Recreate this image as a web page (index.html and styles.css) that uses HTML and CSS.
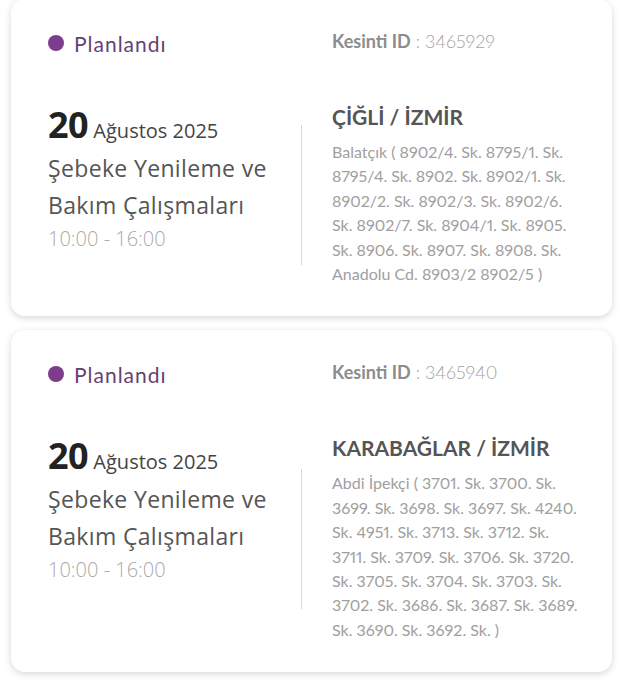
FILE: index.html
```html
<!DOCTYPE html>
<html lang="tr">
<head>
<meta charset="utf-8">
<title>Kesintiler</title>
<link rel="stylesheet" href="styles.css">
</head>
<body>
<div class="list">
  <div class="card">
    <div class="top">
      <div class="status"><span class="dot"></span>Planlandı</div>
      <div class="kid"><b>Kesinti ID</b> : 3465929</div>
    </div>
    <div class="main">
      <div class="when">
        <div class="date"><span class="day">20</span> Ağustos 2025</div>
        <div class="title">Şebeke Yenileme ve Bakım Çalışmaları</div>
        <div class="time">10:00 - 16:00</div>
      </div>
      <div class="divider"></div>
      <div class="where">
        <div class="place">ÇİĞLİ / İZMİR</div>
        <div class="addr">Balatçık ( 8902/4. Sk. 8795/1. Sk. 8795/4. Sk. 8902. Sk. 8902/1. Sk. 8902/2. Sk. 8902/3. Sk. 8902/6. Sk. 8902/7. Sk. 8904/1. Sk. 8905. Sk. 8906. Sk. 8907. Sk. 8908. Sk. Anadolu Cd. 8903/2 8902/5 )</div>
      </div>
    </div>
  </div>
  <div class="card">
    <div class="top">
      <div class="status"><span class="dot"></span>Planlandı</div>
      <div class="kid"><b>Kesinti ID</b> : 3465940</div>
    </div>
    <div class="main">
      <div class="when">
        <div class="date"><span class="day">20</span> Ağustos 2025</div>
        <div class="title">Şebeke Yenileme ve Bakım Çalışmaları</div>
        <div class="time">10:00 - 16:00</div>
      </div>
      <div class="divider"></div>
      <div class="where">
        <div class="place">KARABAĞLAR / İZMİR</div>
        <div class="addr">Abdi İpekçi ( 3701. Sk. 3700. Sk. 3699. Sk. 3698. Sk. 3697. Sk. 4240. Sk. 4951. Sk. 3713. Sk. 3712. Sk. 3711. Sk. 3709. Sk. 3706. Sk. 3720. Sk. 3705. Sk. 3704. Sk. 3703. Sk. 3702. Sk. 3686. Sk. 3687. Sk. 3689. Sk. 3690. Sk. 3692. Sk. )</div>
      </div>
    </div>
  </div>
</div>
</body>
</html>
```

FILE: styles.css
```css
* { box-sizing: border-box; }
html, body { margin: 0; padding: 0; background: #ffffff; }
body { font-family: "Lato", "Noto Sans", sans-serif; }

.list {
  display: flex;
  flex-direction: column;
  gap: 14px;
  margin-top: -1px;
  padding: 0 16px 12px 11px;
}

.card {
  background: #fff;
  border-radius: 14px;
  box-shadow: 0 2px 7px rgba(0, 0, 0, 0.16);
  padding: 30px 30px 30px 37px;
}

.top {
  display: grid;
  grid-template-columns: 284px 1fr;
  height: 28px;
  align-items: center;
}

.status {
  display: flex;
  align-items: center;
  gap: 10px;
  font-size: 21px;
  letter-spacing: 1px;
  color: #673f72;
}

.dot {
  width: 16px;
  height: 16px;
  border-radius: 50%;
  background: #7d3c8c;
}

.kid {
  font-size: 18px;
  color: #a3a3a3;
  font-weight: 300;
  margin-top: -4px;
  font-variant-numeric: proportional-nums;
}
.kid b { font-weight: 700; color: #8c8c8c; }

.main {
  display: grid;
  grid-template-columns: 253px 1px 1fr;
  margin-top: 46px;
}

.when {
  font-family: "Open Sans", "Noto Sans", sans-serif;
  color: #555;
  padding-top: 2px;
  padding-right: 12px;
}

.date { line-height: 39px; font-size: 20px; color: #444; }
.day { font-size: 36px; font-weight: 700; color: #222; letter-spacing: -0.5px; }
.title { font-size: 23px; letter-spacing: 0.35px; line-height: 37px; color: #555; }
.time { font-size: 20px; line-height: 30px; color: #aaa; font-weight: 300; }

.divider {
  align-self: center;
  height: 140px;
  margin-top: 1px;
  background: #d6d6d6;
}

.where { padding-left: 30px; }

.place {
  font-size: 21px;
  font-weight: 700;
  line-height: 28px;
  color: #555;
  margin-bottom: 9px;
}

.addr {
  font-size: 16px;
  line-height: 24.4px;
  color: #a0a0a0;
  font-variant-numeric: proportional-nums;
}
```
